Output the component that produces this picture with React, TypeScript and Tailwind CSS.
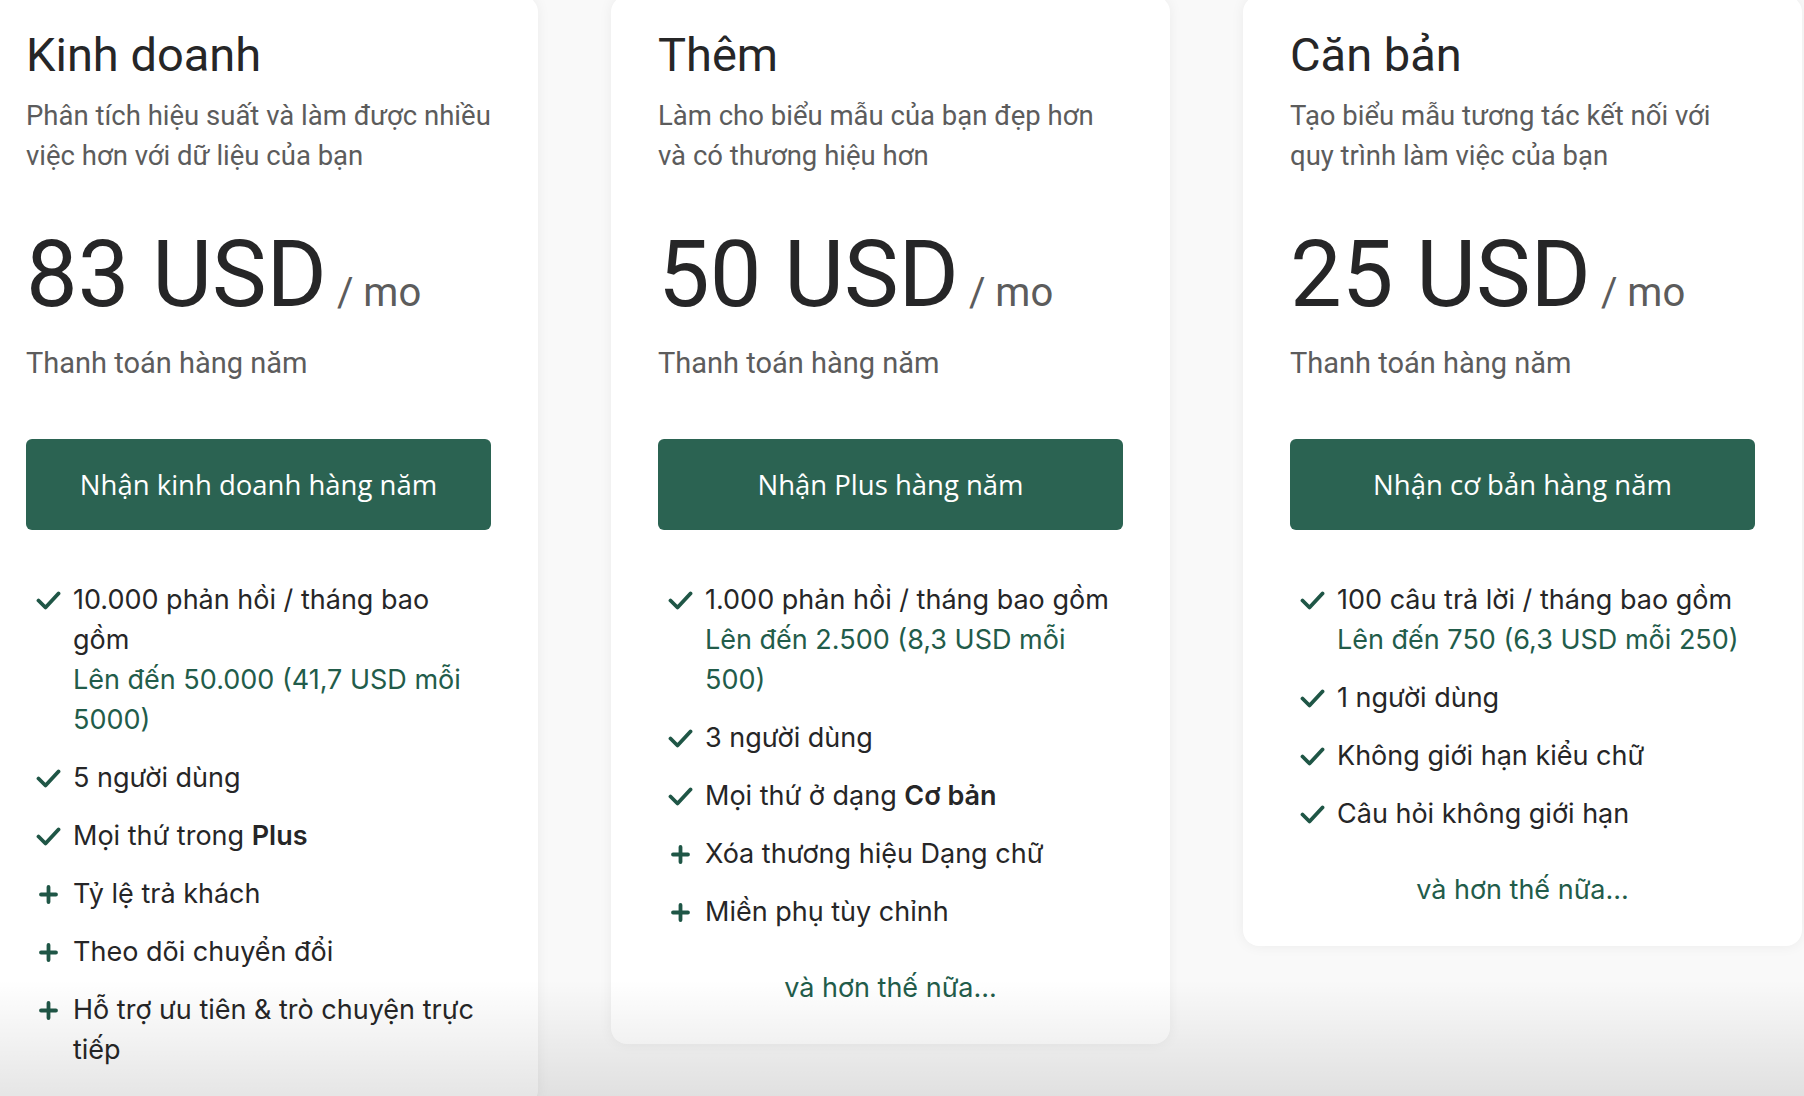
import React from 'react';

type Feature = {
    icon: 'check' | 'plus';
    text: React.ReactNode;
    sub?: string;
};

type Plan = {
    name: string;
    desc: string;
    price: string;
    cta: string;
    more: boolean;
    features: Feature[];
};

const plans: Plan[] = [
    {
        name: 'Kinh doanh',
        desc: 'Phân tích hiệu suất và làm được nhiều việc hơn với dữ liệu của bạn',
        price: '83 USD',
        cta: 'Nhận kinh doanh hàng năm',
        more: false,
        features: [
            { icon: 'check', text: '10.000 phản hồi / tháng bao gồm', sub: 'Lên đến 50.000 (41,7 USD mỗi 5000)' },
            { icon: 'check', text: '5 người dùng' },
            { icon: 'check', text: <>Mọi thứ trong <b className="font-semibold">Plus</b></> },
            { icon: 'plus', text: 'Tỷ lệ trả khách' },
            { icon: 'plus', text: 'Theo dõi chuyển đổi' },
            { icon: 'plus', text: 'Hỗ trợ ưu tiên & trò chuyện trực tiếp' },
        ],
    },
    {
        name: 'Thêm',
        desc: 'Làm cho biểu mẫu của bạn đẹp hơn và có thương hiệu hơn',
        price: '50 USD',
        cta: 'Nhận Plus hàng năm',
        more: true,
        features: [
            { icon: 'check', text: '1.000 phản hồi / tháng bao gồm', sub: 'Lên đến 2.500 (8,3 USD mỗi 500)' },
            { icon: 'check', text: '3 người dùng' },
            { icon: 'check', text: <>Mọi thứ ở dạng <b className="font-semibold">Cơ bản</b></> },
            { icon: 'plus', text: 'Xóa thương hiệu Dạng chữ' },
            { icon: 'plus', text: 'Miền phụ tùy chỉnh' },
        ],
    },
    {
        name: 'Căn bản',
        desc: 'Tạo biểu mẫu tương tác kết nối với quy trình làm việc của bạn',
        price: '25 USD',
        cta: 'Nhận cơ bản hàng năm',
        more: true,
        features: [
            { icon: 'check', text: '100 câu trả lời / tháng bao gồm', sub: 'Lên đến 750 (6,3 USD mỗi 250)' },
            { icon: 'check', text: '1 người dùng' },
            { icon: 'check', text: 'Không giới hạn kiểu chữ' },
            { icon: 'check', text: 'Câu hỏi không giới hạn' },
        ],
    },
];

function CheckIcon() {
    return (
        <svg width="25" height="19" viewBox="0 0 25 19" fill="none">
            <path d="M2.5 9.5l7 7L22.5 2.5" stroke="#1f5646" strokeWidth="3.8" strokeLinecap="round" strokeLinejoin="round" />
        </svg>
    );
}

function PlusIcon() {
    return (
        <svg width="19" height="19" viewBox="0 0 19 19" fill="none">
            <path d="M9.5 2v15M2 9.5h15" stroke="#1f5646" strokeWidth="3.8" strokeLinecap="round" />
        </svg>
    );
}

function PlanCard({ plan }: { plan: Plan }) {
    return (
        <div className="w-[559px] shrink-0 bg-white rounded-2xl shadow-[0_0_14px_rgba(0,0,0,0.06)] px-[47px] pt-[31px] pb-[36px]">
            <h2 className="font-['Roboto',sans-serif] text-[47px] leading-[56px] text-[#262627]">{plan.name}</h2>
            <p className="mt-[13px] font-['Roboto',sans-serif] text-[27.5px] leading-[40px] text-[#5c5c5c]">{plan.desc}</p>
            <div className="mt-[53px] flex items-baseline font-['Roboto',sans-serif] text-[#262627]">
                <span className="text-[92px] leading-none">{plan.price}</span>
                <span className="ml-[10px] text-[40px] leading-none text-[#5c5c5c]">/ mo</span>
            </div>
            <p className="mt-[22px] font-['Roboto',sans-serif] text-[29px] leading-[40px] text-[#5c5c5c]">Thanh toán hàng năm</p>
            <button className="mt-[56px] w-full h-[91px] rounded-md bg-[#2b6352] text-white font-['Open_Sans',sans-serif] text-[27.5px]">
                {plan.cta}
            </button>
            <ul className="mt-[50px] pl-[9px] pr-[6px] flex flex-col gap-[18px] font-['Inter',sans-serif] text-[27px] leading-[40px] text-[#262627]">
                {plan.features.map((f, idx) => (
                    <li key={idx} className="flex gap-[12px]">
                        <span className="w-[26px] h-[40px] shrink-0 flex items-center justify-center">
                            {f.icon === 'check' ? <CheckIcon /> : <PlusIcon />}
                        </span>
                        <div>
                            <div>{f.text}</div>
                            {f.sub && <div className="text-[#225c4a]">{f.sub}</div>}
                        </div>
                    </li>
                ))}
            </ul>
            {plan.more && (
                <p className="mt-[36px] text-center font-['Inter',sans-serif] text-[27px] leading-[40px] text-[#225c4a]">và hơn thế nữa...</p>
            )}
        </div>
    );
}

export default function App() {
    return (
        <div className="relative w-[1804px] h-[1096px] overflow-hidden bg-[#f9f9f9]">
            <div className="flex items-start gap-[73px] ml-[-21px] mt-[-4px]">
                {plans.map((p) => (
                    <PlanCard key={p.name} plan={p} />
                ))}
            </div>
            <div className="pointer-events-none absolute inset-x-0 bottom-0 h-[116px] bg-gradient-to-b from-black/0 to-black/10"></div>
        </div>
    );
}
